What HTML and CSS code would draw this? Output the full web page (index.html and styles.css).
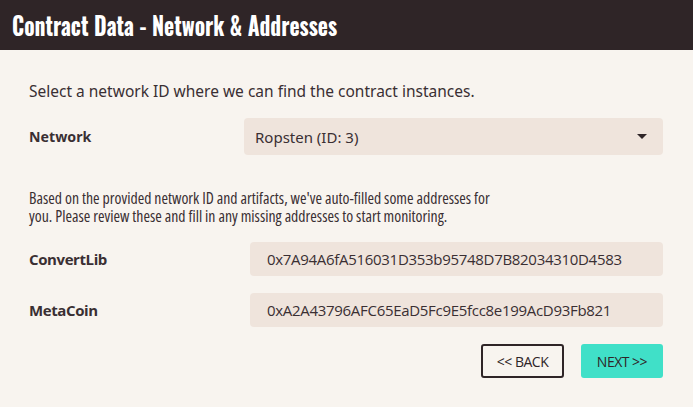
FILE: index.html
```html
<!DOCTYPE html>
<html>
<head>
<meta charset="utf-8">
<link rel="stylesheet" href="styles.css">
</head>
<body>
<header class="header"><h1 class="title">Contract Data - Network &amp; Addresses</h1></header>
<main class="content">
  <p class="intro">Select a network ID where we can find the contract instances.</p>
  <div class="row row-network">
    <label class="label">Network</label>
    <div class="select">
      <span class="select-text">Ropsten (ID: 3)</span>
      <svg class="caret" width="10" height="5" viewBox="0 0 10 5"><path d="M0 0h10L5 5z" fill="#2f2527"/></svg>
    </div>
  </div>
  <p class="desc">Based on the provided network ID and artifacts, we've auto-filled some addresses for you. Please review these and fill in any missing addresses to start monitoring.</p>
  <div class="row row-addr">
    <label class="label label-addr">ConvertLib</label>
    <div class="input">0x7A94A6fA516031D353b95748D7B82034310D4583</div>
  </div>
  <div class="row row-addr">
    <label class="label label-addr">MetaCoin</label>
    <div class="input">0xA2A43796AFC65EaD5Fc9E5fcc8e199AcD93Fb821</div>
  </div>
  <div class="actions">
    <button class="btn btn-back">&lt;&lt; BACK</button>
    <button class="btn btn-next">NEXT &gt;&gt;</button>
  </div>
</main>
</body>
</html>
```
FILE: styles.css
```css
html, body { margin: 0; padding: 0; }
body {
  background: #f8f4ef;
  color: #3a2f33;
  font-family: "Noto Sans", "Open Sans", sans-serif;
  width: 693px;
  height: 407px;
  overflow: hidden;
}
.header {
  background: #2f2527;
  height: 50px;
  display: flex;
  align-items: center;
  padding: 0 12px;
}
.title {
  margin: 0;
  color: #fff;
  font-family: Oswald, "Roboto Condensed", sans-serif;
  font-weight: 700;
  font-size: 25px;
  line-height: 30px;
  white-space: nowrap;
  transform: scaleX(0.862);
  transform-origin: left center;
}
.content {
  padding: 0 30px 0 29px;
}
.intro {
  margin: 31px 0 0 0;
  font-size: 15.5px;
  line-height: 20px;
}
.row { display: flex; align-items: center; }
.label {
  font-weight: 700;
  font-size: 14.2px;
}
.row-network { margin-top: 17px; }
.row-network .label { width: 215px; flex: none; }
.select {
  flex: 1;
  height: 37px;
  background: #efe4dc;
  border-radius: 4px;
  display: flex;
  align-items: center;
  justify-content: space-between;
  padding: 0 16px 0 11px;
  font-size: 15px;
}
.caret { display: block; }
.desc {
  margin: 34px 0 0 0;
  max-width: 470px;
  font-family: "Open Sans", sans-serif;
  font-stretch: 75%;
  font-size: 15.8px;
  line-height: 18px;
}
.row-addr { margin-top: 17px; }
.label-addr {
  width: 221px;
  flex: none;
  font-family: "Open Sans", sans-serif;
  font-stretch: 90%;
  font-size: 15px;
  letter-spacing: -0.4px;
}
.input {
  flex: 1;
  height: 34px;
  background: #efe4dc;
  border-radius: 4px;
  display: flex;
  align-items: center;
  padding: 0 17px;
  font-family: "Open Sans", sans-serif;
  font-stretch: 90%;
  font-size: 15px;
  letter-spacing: -0.3px;
}
.actions {
  display: flex;
  justify-content: flex-end;
  gap: 17px;
  margin-top: 17px;
}
.btn {
  height: 34px;
  border-radius: 3px;
  font-family: "Open Sans", sans-serif;
  font-stretch: 90%;
  font-size: 14px;
  letter-spacing: -0.5px;
  color: #2f2527;
  padding: 0;
  cursor: pointer;
}
.btn-back {
  width: 83px;
  background: transparent;
  border: 2px solid #2f2527;
}
.btn-next {
  width: 82px;
  background: #40e0c8;
  border: none;
}
```
